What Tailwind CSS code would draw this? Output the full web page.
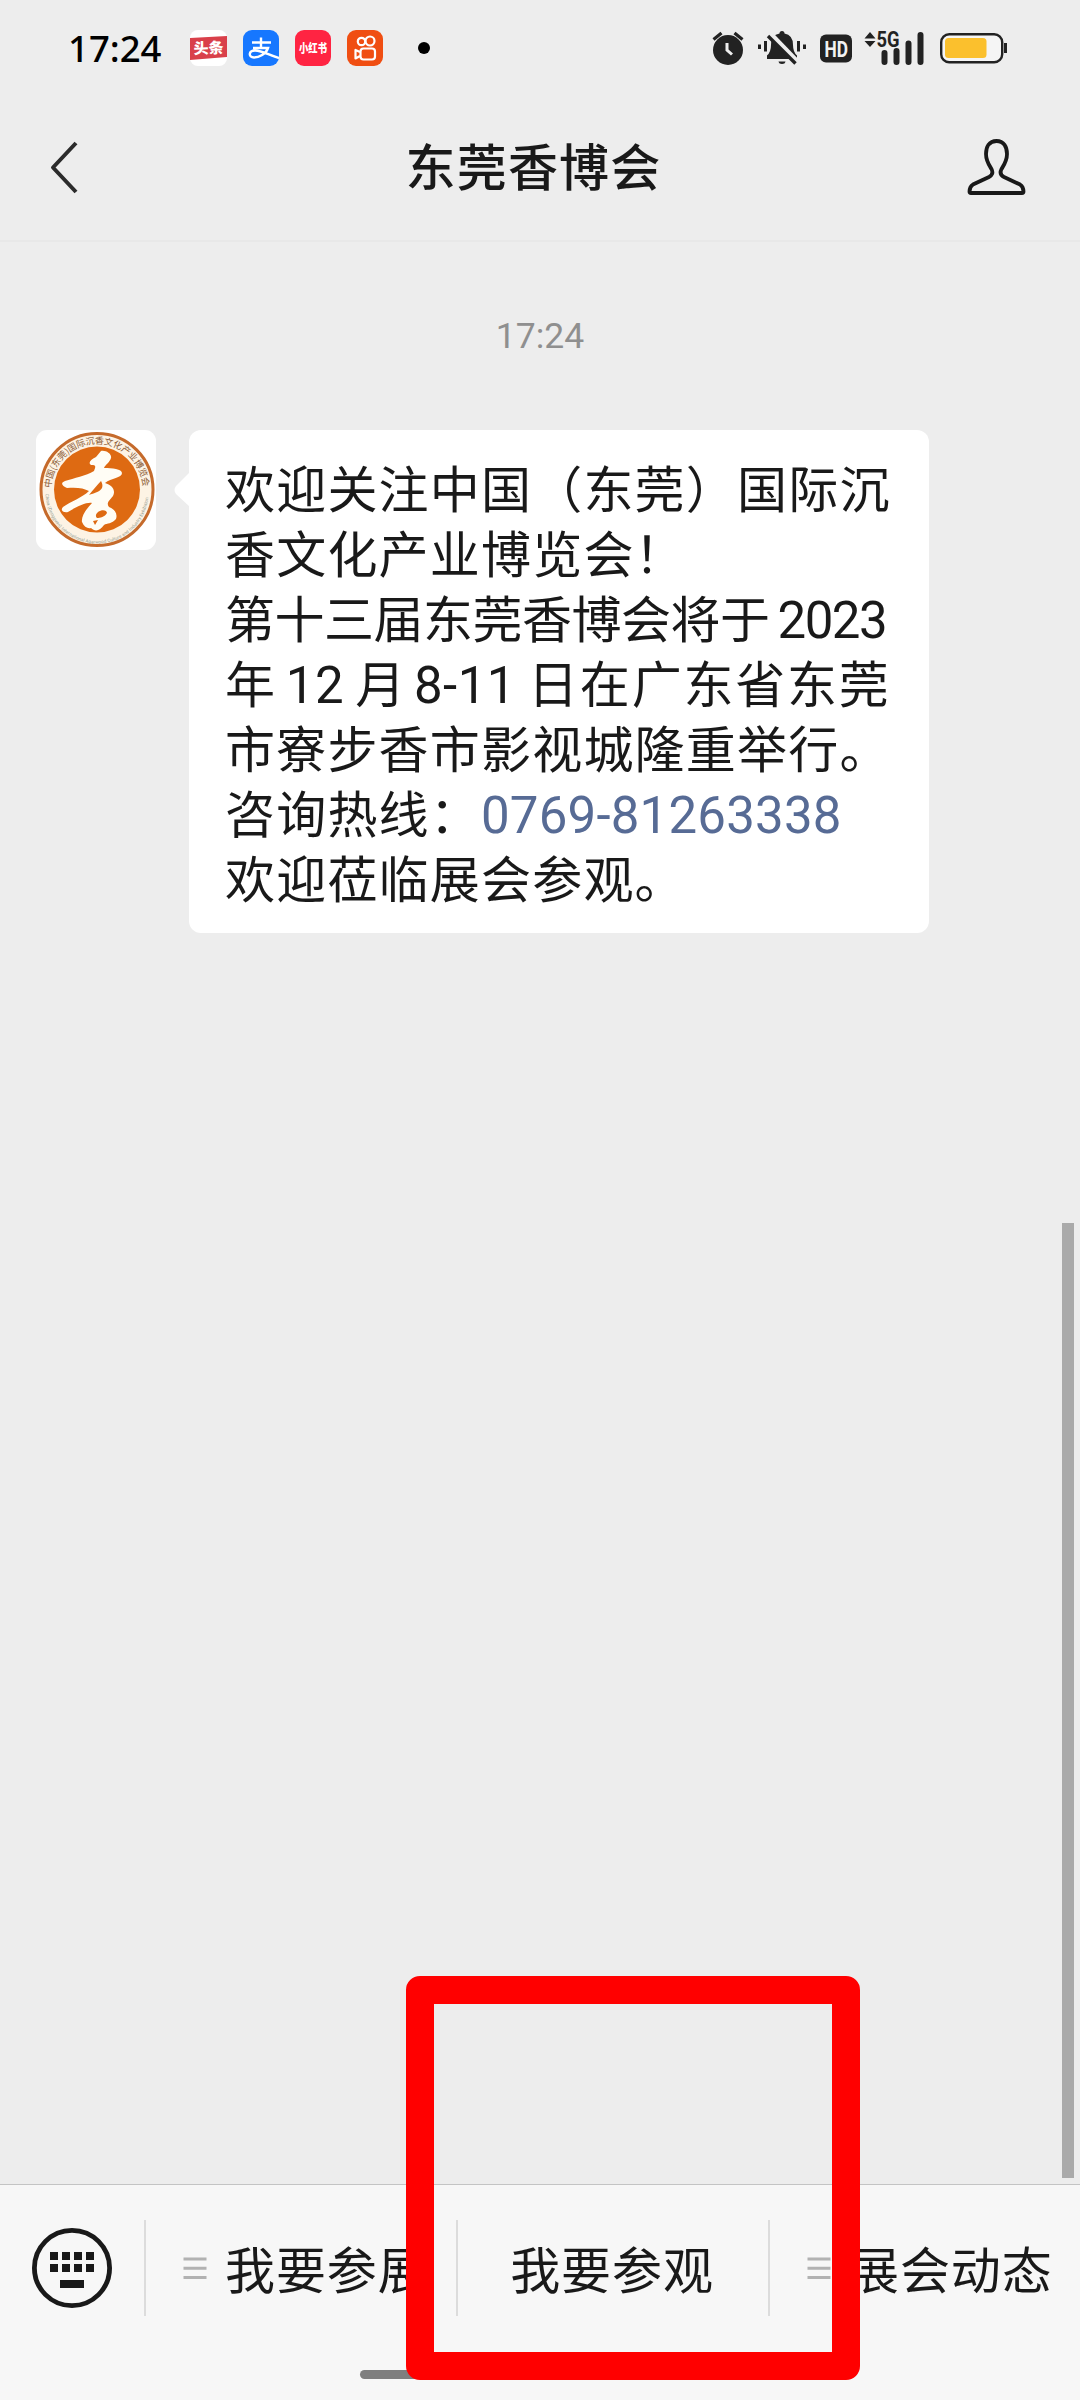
<!DOCTYPE html>
<html lang="zh-CN">
<head>
  <meta charset="UTF-8" />
  <meta name="viewport" content="width=device-width, initial-scale=1.0" />
  <title>东莞香博会</title>
  <script src="https://cdn.jsdelivr.net/npm/@tailwindcss/browser@4"></script>
</head>
<body class="bg-[#ededed] text-[#191919] font-['Noto_Sans_CJK_SC',sans-serif]">
  <div class="relative w-[1080px] h-[2400px] flex flex-col overflow-hidden">

    <!-- Status bar -->
    <div class="h-[96px] shrink-0 flex items-center pl-[68px] pr-[72px]">
      <span class="w-[122px] text-[36.500px] leading-[96px] font-['Noto_Sans',sans-serif] font-medium text-black">17:24</span>
      <div class="flex items-center gap-4">
        <svg class="w-[37px] h-9" viewBox="0 0 37 36">
          <rect width="37" height="36" rx="8" fill="#fff" />
          <path d="M0 8 37 6V27L0 30Z" fill="#d9404a" />
          <text x="18.5" y="23.500" font-size="15" font-weight="900" text-anchor="middle" fill="#fff" transform="rotate(-2 18 18)">头条</text>
        </svg>
        <svg class="w-9 h-9" viewBox="0 0 36 36">
          <rect width="36" height="36" rx="9" fill="#1677ff" />
          <path d="M9 12.500H28M18 7.500V18M10 18H25C23 24 16 27.500 11 27.500 5 27.500 5.500 20.500 12 20.500 19 20.500 27 25.500 36 28" fill="none" stroke="#fff" stroke-width="2.400" />
        </svg>
        <svg class="w-9 h-9" viewBox="0 0 36 36">
          <rect width="36" height="36" rx="9" fill="#ff2442" />
          <text x="4" y="22.500" font-size="12" font-weight="900" textLength="28" lengthAdjust="spacingAndGlyphs" fill="#fff">小红书</text>
        </svg>
        <svg class="w-9 h-9" viewBox="0 0 36 36">
          <rect width="36" height="36" rx="9" fill="#f04e12" />
          <g fill="none" stroke="#fff" stroke-width="2.200">
            <circle cx="14.500" cy="11.500" r="3.700" />
            <circle cx="23" cy="11" r="4.500" />
            <rect x="13.500" y="18.500" width="14.500" height="11" rx="3" />
            <path d="M13 22 8.500 20V28.500L13 26" stroke-linejoin="round" />
          </g>
        </svg>
      </div>
      <span class="w-3 h-3 ml-[35px] rounded-full bg-black"></span>

      <div class="ml-auto flex items-center">
        <!-- alarm -->
        <svg class="w-8 h-9" viewBox="0 0 32 36">
          <circle cx="16" cy="20" r="15" fill="#222" />
          <path d="M1.500 9.500 9.500 3M30.500 9.500 22.500 3" stroke="#222" stroke-width="3.200" />
          <path d="M15 13V20L20 24.500" fill="none" stroke="#ededed" stroke-width="3" />
        </svg>
        <!-- muted bell -->
        <svg class="w-[50px] h-9 ml-[13px]" viewBox="0 0 50 36">
          <path d="M10 29V25.500Q14 22 14 15 14 5 22.500 3.500 22.500 1 25 1T27.500 3.500Q36 5 36 15 36 22 40 25.500V29ZM21.500 31.500H28.500Q28 34 25 34T21.500 31.500Z" fill="#222" />
          <path d="M12.500 3.500 41 33" stroke="#ededed" stroke-width="6" />
          <path d="M11 6 38.500 33.500" stroke="#222" stroke-width="3.400" />
          <path d="M2.500 14.500V19M8.500 11V21.500M41.500 11V21.500M47.500 14.500V19" stroke="#222" stroke-width="3" />
        </svg>
        <!-- HD badge -->
        <svg class="w-8 h-9 ml-[13px]" viewBox="0 0 32 36">
          <rect y="4.500" width="32" height="28" rx="6" fill="#222" />
          <text x="4.500" y="26.500" font-size="22" font-weight="700" font-family="Roboto, sans-serif" textLength="23.500" lengthAdjust="spacingAndGlyphs" fill="#f2f2f2">HD</text>
        </svg>
        <!-- 5G signal -->
        <svg class="w-[60px] h-10 -mt-1 ml-3" viewBox="0 -4 60 40">
          <path d="M.5 8.500 6 2 11.500 8.500ZM.5 11 6 17 11.500 11Z" fill="#222" />
          <text x="12.500" y="17" font-size="22" font-weight="700" font-family="Roboto, sans-serif" textLength="23" lengthAdjust="spacingAndGlyphs" fill="#222">5G</text>
          <path d="M20.500 23V32M32.500 21V32M44.500 13.500V32M56.500 5V32" stroke="#222" stroke-width="6" stroke-linecap="round" />
        </svg>
        <!-- battery -->
        <svg class="w-[68px] h-9 ml-4" viewBox="0 0 68 36">
          <rect x="1.200" y="4.200" width="61" height="28" rx="8" fill="#f5f5f5" stroke="#222" stroke-width="2.400" />
          <rect x="5" y="8" width="41.500" height="20" rx="3.500" fill="#fbc02d" />
          <path d="M65.500 13V23" stroke="#222" stroke-width="3" />
        </svg>
      </div>
    </div>

    <!-- Title bar -->
    <div class="h-[146px] shrink-0 flex items-center justify-between pl-[49px] pr-[54px] pb-[2px] border-b-2 border-[#e8e8e8]">
      <svg class="w-[30px] h-[54px]" viewBox="0 0 30 54">
        <path d="M27 3 4 27.500 27 52" fill="none" stroke="#2b2b2b" stroke-width="4" stroke-linejoin="round" />
      </svg>
      <h1 class="text-[50px] leading-[70px] tracking-[1.2px] font-medium pl-[21px] -mt-1.5">东莞香博会</h1>
      <svg class="w-[59px] h-[58px]" viewBox="0 0 59 58">
        <path d="M29.500 3C22 3 19 9 19 16 19 23 22 27 24.500 31 26.500 35 25 37.500 22 39L6 46.500C3 48.500 2.500 50 2.500 53.500Q2.500 55 4 55H55Q56.500 55 56.500 53.500C56.500 50 56 48.500 53 46.500L37 39C34 37.500 32.500 35 34.500 31 37 27 40 23 40 16 40 9 37 3 29.500 3Z" fill="none" stroke="#191919" stroke-width="3.800" />
      </svg>
    </div>

    <!-- Conversation -->
    <div class="relative grow">
      <div class="pt-[71px] text-center text-[35.500px] leading-[46px] text-[#8f8f8f] font-[Roboto,sans-serif]">17:24</div>

      <div class="flex items-start gap-[33px] mt-[71px] pl-9">
        <svg class="w-[120px] h-[120px] shrink-0" viewBox="0 0 120 120">
          <defs>
            <path id="topArc" d="M15 60A46 46 0 0 1 107 60" />
            <path id="bottomArc" d="M9.500 62A51.500 51.500 0 0 0 112.500 62" />
          </defs>
          <rect width="120" height="120" rx="11" fill="#fff" />
          <circle cx="61" cy="59.500" r="56" fill="#fdf3e4" stroke="#c56a2b" stroke-width="3" />
          <circle cx="61" cy="59.500" r="43" fill="#de6a12" />
          <text font-size="9" fill="#8a5a35"><textPath href="#topArc" startOffset="2" textLength="139">中国(东莞)国际沉香文化产业博览会</textPath></text>
          <text font-size="4.500" fill="#8f9a90" font-family="Roboto, sans-serif"><textPath href="#bottomArc" startOffset="2" textLength="154">China (Dongguan) International Agarwood Culture and Industry Exhibition</textPath></text>
          <!-- brush-style mark -->
          <path d="M65 21C70 20 76 24 75 28 74 32 69 35 68 38 76 38 86 39 86 43 86 48 75 48 69 53 76 55 80 60 77 66 73 71 70 73 73 77 78 79 82 83 80 89 76 94 71 93 68 95 64 101 59 102 55 98 52 99 48 97 46 92 45 87 50 79 56 73 50 72 40 77 32 82 27 83 24 80 27 77 35 71 46 68 53 61 48 58 40 57 31 58 26 56 24 53 29 51 38 48 50 46 58 41 60 36 60 35 55 35 52 33 54 30 60 27 62 23 65 21Z" fill="#fffdf5" />
          <path d="M65 51C61 55 57 60 53 65 58 63 64 62 66 58 67 55 66 53 65 51ZM62 82C66 79 71 80 71 83 69 87 64 88 61 88 59 86 60 84 62 82ZM57 91 62 90 59 95Z" fill="#de6a12" />
        </svg>

        <div class="relative w-[740px] h-[503px] rounded-xl bg-white pt-6 pl-9 text-[50px] leading-[65px] whitespace-nowrap">
          <svg class="absolute -left-[15px] top-[42px] w-4 h-9" viewBox="0 0 16 36"><path d="M16 0 2 14Q-1 18 2 22L16 35Z" fill="#fff" /></svg>
          <p class="h-[65px] tracking-[1.2px]">欢迎关注中国（东莞）国际沉</p>
          <p class="h-[65px] tracking-[1.2px]">香文化产业博览会！</p>
          <p class="h-[65px] tracking-[-0.5px]">第十三届东莞香博会将于<span class="font-[Roboto,sans-serif] text-[51px] leading-none tracking-[-1.5px] ml-2">2023</span></p>
          <p class="h-[65px] tracking-[1.8px]">年<span class="font-[Roboto,sans-serif] text-[51px] leading-none tracking-[0.5px] ml-[9px] mr-[11px]">12</span>月<span class="font-[Roboto,sans-serif] text-[51px] leading-none tracking-[0.5px] ml-[7px] mr-[12px]">8-11</span>日在广东省东莞</p>
          <p class="h-[65px] tracking-[1.2px]">市寮步香市影视城隆重举行。</p>
          <p class="h-[65px] tracking-[1.2px]">咨询热线：<span class="font-[Roboto,sans-serif] text-[51px] leading-none tracking-[0.2px] text-[#576b95]">0769-81263338</span></p>
          <p class="h-[65px] tracking-[1.2px]">欢迎莅临展会参观。</p>
        </div>
      </div>

      <!-- scrollbar -->
      <div class="absolute right-[6px] top-[981px] w-3 h-[955px] bg-[#aaa]"></div>
    </div>

    <!-- Menu bar -->
    <div class="h-[216px] shrink-0 bg-[#f7f7f7] border-t border-[#c4c4c4] flex flex-col items-center">
      <div class="w-full h-[166px] flex items-center">
        <div class="w-36 h-full flex items-center pl-8">
          <svg class="w-20 h-20" viewBox="0 0 80 80">
            <circle cx="40" cy="40" r="37.600" fill="none" stroke="#191919" stroke-width="4.800" />
            <path d="M18 28H62M18 40H62" stroke="#191919" stroke-width="8" stroke-dasharray="8 4" />
            <path d="M28 56H52" stroke="#191919" stroke-width="8" />
          </svg>
        </div>
        <div class="w-[312px] h-24 border-l-2 border-[#dcdcdc] flex items-center pl-[37px] gap-[18px]">
          <svg class="w-6 h-6 shrink-0" viewBox="0 0 24 24"><path d="M.5 3H23.500M.5 12.300H23.500M.5 21.600H23.500" stroke="#b2b2b2" stroke-width="3" /></svg>
          <span class="text-[50px] leading-[70px] tracking-[0.9px] whitespace-nowrap pb-[3px]">我要参展</span>
        </div>
        <div class="w-[312px] h-24 border-l-2 border-[#dcdcdc] flex items-center justify-center">
          <span class="text-[50px] leading-[70px] tracking-[0.9px] whitespace-nowrap pb-[3px] pr-[2px]">我要参观</span>
        </div>
        <div class="w-[312px] h-24 border-l-2 border-[#dcdcdc] flex items-center pl-[37px] gap-[18px]">
          <svg class="w-6 h-6 shrink-0" viewBox="0 0 24 24"><path d="M.5 3H23.500M.5 12.300H23.500M.5 21.600H23.500" stroke="#b2b2b2" stroke-width="3" /></svg>
          <span class="text-[50px] leading-[70px] tracking-[0.9px] whitespace-nowrap pb-[3px]">展会动态</span>
        </div>
      </div>
      <div class="w-[360px] h-[9px] mt-[19px] rounded-full bg-[#7f7f7f]"></div>
    </div>

    <!-- highlight frame -->
    <div class="absolute left-[406px] top-[1976px] w-[454px] h-[404px] rounded-[14px] border-[28px] border-[#ff0000]"></div>
  </div>
</body>
</html>
